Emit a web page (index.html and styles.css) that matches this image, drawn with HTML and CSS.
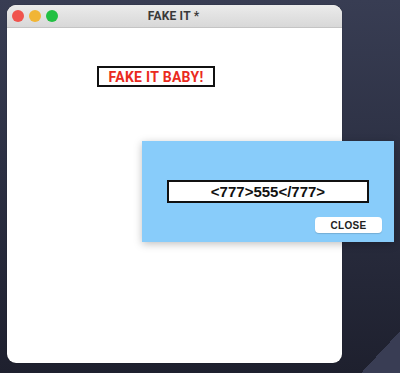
FILE: index.html
```html
<!DOCTYPE html>
<html>
<head>
<meta charset="utf-8">
<link rel="stylesheet" href="styles.css">
</head>
<body>
<div class="desktop">
  <div class="window">
    <div class="titlebar">
      <div class="lights">
        <span class="light red"></span>
        <span class="light yellow"></span>
        <span class="light green"></span>
      </div>
      <div class="title">FAKE IT *</div>
    </div>
    <div class="content">
      <div class="label">FAKE IT BABY!</div>
    </div>
  </div>
  <div class="popup">
    <div class="field">&lt;777&gt;555&lt;/777&gt;</div>
    <div class="actions">
      <button class="close">CLOSE</button>
    </div>
  </div>
</div>
</body>
</html>
```

FILE: styles.css
```css
html, body {
  margin: 0;
  padding: 0;
}
body {
  width: 400px;
  height: 373px;
  overflow: hidden;
  font-family: Roboto, "Liberation Sans", sans-serif;
}
.desktop {
  position: relative;
  width: 400px;
  height: 373px;
  box-sizing: border-box;
  padding: 5px 0 0 7px;
  background:
    linear-gradient(133deg, transparent 0, transparent 94.8%, #393d54 94.8%, #393d54 100%),
    linear-gradient(180deg, #383d53 0%, #2c3043 45%, #1e202e 100%);
}
.window {
  width: 335px;
  height: 358px;
  background: #ffffff;
  border-radius: 9px;
  overflow: hidden;
  display: flex;
  flex-direction: column;
  box-shadow: 0 0 1px rgba(0,0,0,0.6);
}
.titlebar {
  height: 22px;
  flex: none;
  display: flex;
  align-items: center;
  position: relative;
  background: linear-gradient(180deg, #ebebeb 0%, #d8d8d8 100%);
  border-bottom: 1px solid #c4c4c4;
}
.lights {
  display: flex;
  gap: 5px;
  padding-left: 5px;
}
.light {
  width: 12px;
  height: 12px;
  border-radius: 50%;
  display: block;
}
.light.red { background: #f0534d; }
.light.yellow { background: #f1b535; }
.light.green { background: #22c043; }
.title {
  position: absolute;
  left: 0;
  right: 0;
  top: 0;
  bottom: 0;
  display: flex;
  align-items: center;
  justify-content: center;
  font-size: 12px;
  font-weight: 700;
  color: #3a3a3a;
  padding-right: 2px;
  letter-spacing: 0.2px;
}
.content {
  flex: 1;
  padding: 38px 0 0 90px;
}
.label {
  width: 114px;
  height: 17px;
  border: 2px solid #111;
  display: flex;
  align-items: center;
  justify-content: center;
  color: #ea2a20;
  font-size: 14px;
  font-weight: 700;
  letter-spacing: 0.3px;
}
.popup {
  position: absolute;
  left: 142px;
  top: 141px;
  width: 252px;
  height: 101px;
  box-sizing: border-box;
  background: #88ccfa;
  padding: 39px 25px 0 25px;
  display: flex;
  flex-direction: column;
  box-shadow: 0 2px 8px rgba(0,0,0,0.25);
}
.field {
  height: 19px;
  border: 2px solid #111;
  background: #fff;
  display: flex;
  align-items: center;
  justify-content: center;
  font-family: "Liberation Sans", Arial, sans-serif;
  font-size: 15px;
  font-weight: 700;
  color: #111;
}
.actions {
  display: flex;
  justify-content: flex-end;
  margin-top: 14px;
  margin-right: -13px;
}
.close {
  width: 67px;
  height: 16px;
  border: none;
  border-radius: 4px;
  background: #fff;
  padding: 0;
  font-family: "Liberation Sans", Arial, sans-serif;
  font-size: 10px;
  font-weight: 700;
  color: #222;
  letter-spacing: 0.3px;
  box-shadow: 0 1px 1px rgba(0,0,0,0.15);
}
```
